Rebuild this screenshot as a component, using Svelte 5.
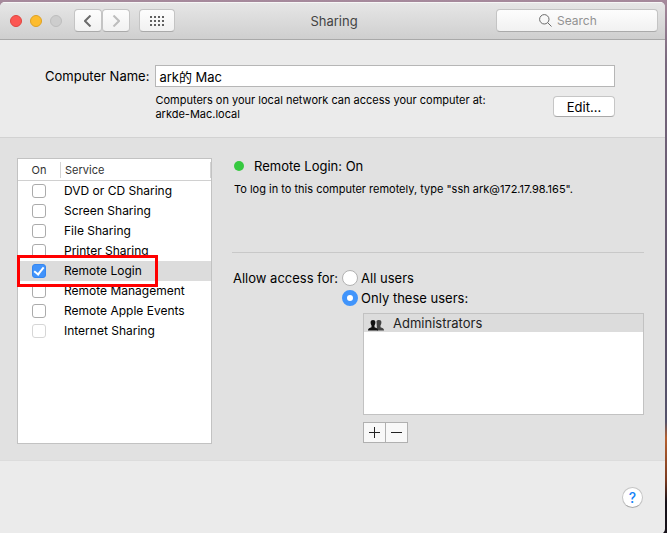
<script lang="ts">
type Service = {
	name: string;
	on: boolean;
	disabled?: boolean;
};

let services: Service[] = $state([
	{ name: 'DVD or CD Sharing', on: false },
	{ name: 'Screen Sharing', on: false },
	{ name: 'File Sharing', on: false },
	{ name: 'Printer Sharing', on: false },
	{ name: 'Remote Login', on: true },
	{ name: 'Remote Management', on: false },
	{ name: 'Remote Apple Events', on: false },
	{ name: 'Internet Sharing', on: false, disabled: true },
]);

let selected = $state('Remote Login');
let computerName = $state('ark的 Mac');
let access = $state('some');
let query = $state('');

const users = ['Administrators'];

// Dots of the "show all" button, 4 x 3
const dots = [0, 1, 2].flatMap((row) => [0, 1, 2, 3].map((col) => ({ x: col * 4, y: row * 4 })));
</script>

<div class="desktop">
	<div class="window">
		<header class="toolbar">
			<div class="controls">
				<div class="lights">
					<button class="light close" aria-label="Close"></button>
					<button class="light minimize" aria-label="Minimize"></button>
					<button class="light zoom" aria-label="Zoom" disabled></button>
				</div>
				<div class="nav">
					<button class="tool" aria-label="Back">
						<svg width="8" height="12" viewBox="0 0 8 12"><path d="M6.5 .5 1 6l5.5 5.5" /></svg>
					</button>
					<button class="tool" aria-label="Forward" disabled>
						<svg width="8" height="12" viewBox="0 0 8 12"><path d="M1.5 .5 7 6l-5.5 5.5" /></svg>
					</button>
				</div>
				<button class="tool grid" aria-label="Show All">
					<svg class="dots" width="14" height="10" viewBox="0 0 14 10">
						{#each dots as dot}
							<rect x={dot.x} y={dot.y} width="2" height="2" />
						{/each}
					</svg>
				</button>
			</div>
			<h1>Sharing</h1>
			<label class="search">
				<svg width="13" height="13" viewBox="0 0 13 13">
					<circle cx="5.3" cy="5.3" r="4.7" />
					<path d="M8.7 8.7 12.5 12.5" />
				</svg>
				<input type="text" placeholder="Search" aria-label="Search" bind:value={query} />
			</label>
		</header>

		<section class="identity">
			<label class="name-label" for="computer-name">Computer Name:</label>
			<div class="identity-fields">
				<input id="computer-name" type="text" bind:value={computerName} />
				<div class="identity-note">
					<p>Computers on your local network can access your computer at:<br />arkde-Mac.local</p>
					<button class="push">Edit…</button>
				</div>
			</div>
		</section>

		<main class="panel">
			<div class="services">
				<table>
					<thead>
						<tr>
							<th class="on">On</th>
							<th><span>Service</span></th>
						</tr>
					</thead>
					<tbody>
						{#each services as service, i}
							<tr class:selected={selected === service.name} onclick={() => (selected = service.name)}>
								<td class="on">
									<input
										id="service-{i}"
										type="checkbox"
										bind:checked={service.on}
										disabled={service.disabled}
									/>
								</td>
								<td><label for="service-{i}">{service.name}</label></td>
							</tr>
						{/each}
					</tbody>
				</table>
				<div class="marker"></div>
			</div>

			<div class="detail">
				<div class="status">
					<h2><span class="lamp"></span>Remote Login: On</h2>
					<p>To log in to this computer remotely, type "ssh ark@172.17.98.165".</p>
				</div>

				<div class="access">
					<span id="access-label">Allow access for:</span>
					<div class="radios" role="radiogroup" aria-labelledby="access-label">
						<label><input type="radio" name="access" value="all" bind:group={access} />All users</label>
						<label><input type="radio" name="access" value="some" bind:group={access} />Only these users:</label>
					</div>
				</div>

				<div class="users">
					<ul>
						{#each users as user}
							<li>
								<svg width="16" height="11" viewBox="0 0 16 11">
									<path
										class="back"
										d="M8.5 1.2C9 .2 10 0 11 0c1.600 0 2.400 .8 2.400 2.300 0 1.300-.4 2.300-.9 2.900v2l2.400 1c.8.4 1.100 1.300 1.100 2.300H9z"
									/>
									<path
										d="M2.600 2.300C2.600.8 3.600 0 5 0s2.400.8 2.400 2.300c0 1.300-.4 2.300-.9 2.900v2l2.400 1c.8.4 1.100 1.300 1.100 2.300H0c0-1 .3-1.900 1.100-2.300l2.400-1v-2c-.5-.6-.9-1.600-.9-2.900z"
									/>
								</svg>
								{user}
							</li>
						{/each}
					</ul>
					<div class="add-remove">
						<button aria-label="Add user">
							<svg width="11" height="11" viewBox="0 0 11 11"><path d="M0 5.5h11M5.5 0v11" /></svg>
						</button>
						<button aria-label="Remove user">
							<svg width="11" height="11" viewBox="0 0 11 11"><path d="M0 5.5h11" /></svg>
						</button>
					</div>
				</div>
			</div>
		</main>

		<footer>
			<button class="help" aria-label="Help">?</button>
		</footer>
	</div>
</div>

<style>
	:global(body) {
		margin: 0;
	}

	.desktop {
		box-sizing: border-box;
		min-height: 100vh;
		display: flex;
		padding: 2px 2px 0 0;
		background: linear-gradient(#a68a9c, #77677c 12%, #5b5068 60%, #54526a 79%, #b5602f 82%, #7a3a20 90%, #17121a 94%);
		font-family: Inter, 'Noto Sans CJK SC', sans-serif;
		font-size: 13px;
		line-height: 16px;
		color: #000;
	}

	button,
	input {
		box-sizing: border-box;
		margin: 0;
		padding: 0;
		font: inherit;
		color: inherit;
	}

	h1,
	h2,
	p,
	ul {
		margin: 0;
		padding: 0;
		font-size: inherit;
		font-weight: 400;
	}

	svg {
		display: block;
		fill: none;
		stroke: #222;
	}

	.window {
		flex: 1;
		min-width: 0;
		display: flex;
		flex-direction: column;
		border-radius: 5px 5px 5px 0;
		background: #ebebeb;
		overflow: hidden;
	}

	/* Toolbar */
	.toolbar {
		display: grid;
		grid-template-columns: 1fr auto 1fr;
		align-items: center;
		padding: 6px 7px 7px 10px;
		border-top: 1px solid #f6f6f6;
		border-bottom: 1px solid #a9a9a9;
		background: linear-gradient(#e6e6e6, #cfcfcf);
	}

	.controls,
	.lights,
	.nav {
		display: flex;
		align-items: center;
	}

	.lights {
		gap: 8px;
		margin-right: 12px;
	}

	.light {
		width: 12px;
		height: 12px;
		border: 1px solid #bdbdbd;
		border-radius: 50%;
		background: #cdcdcd;
	}

	.close {
		border-color: #e0443e;
		background: #fc5753;
	}

	.minimize {
		border-color: #dea123;
		background: #fdbc2e;
	}

	.nav {
		margin-right: 9px;
	}

	.tool {
		width: 28px;
		height: 23px;
		display: grid;
		place-items: center;
		border: 1px solid #c4c4c4;
		border-bottom-color: #aaa;
		border-radius: 4px;
		background: linear-gradient(#fdfdfd, #f1f1f1);
	}

	.tool svg {
		stroke: #6b6b6b;
		stroke-width: 2;
	}

	.tool:disabled svg {
		stroke: #bdbdbd;
	}

	.grid {
		width: 36px;
	}

	.tool .dots {
		fill: #606060;
		stroke: none;
	}

	.toolbar h1 {
		color: #444;
	}

	.search {
		box-sizing: border-box;
		justify-self: end;
		width: 162px;
		height: 23px;
		display: flex;
		align-items: center;
		justify-content: center;
		gap: 5px;
		border: 1px solid #c4c4c4;
		border-bottom-color: #aaa;
		border-radius: 4px;
		background: linear-gradient(#fdfdfd, #f1f1f1);
	}

	.search svg {
		stroke: #6b6b6b;
	}

	.search input {
		width: 58px;
		border: 0;
		background: none;
		font-size: 12px;
		outline: none;
	}

	.search input::placeholder {
		color: #929292;
		opacity: 1;
	}

	/* Computer name */
	.identity {
		display: flex;
		gap: 6px;
		padding: 25px 50px 16px 45px;
		border-bottom: 1px solid #d2d2d2;
	}

	.name-label {
		padding-top: 3px;
		white-space: nowrap;
	}

	.identity-fields {
		flex: 1;
		min-width: 0;
	}

	.identity-fields > input {
		display: block;
		width: 100%;
		height: 22px;
		padding: 0 3px;
		border: 1px solid #b6b6b6;
		background: #fff;
	}

	.identity-note {
		display: flex;
		justify-content: space-between;
		align-items: flex-start;
		padding-top: 6px;
		font-size: 11px;
		line-height: 14px;
	}

	.push {
		width: 62px;
		height: 21px;
		margin-top: 3px;
		border: 1px solid #c6c6c6;
		border-bottom-color: #a8a8a8;
		border-radius: 4px;
		background: #fff;
		font-size: 13px;
		line-height: 16px;
	}

	/* Service list and detail */
	.panel {
		display: flex;
		gap: 20px;
		padding: 20px 21px 16px 17px;
		border-bottom: 1px solid #dcdcdc;
		background: #e1e1e1;
	}

	.services {
		box-sizing: border-box;
		position: relative;
		width: 195px;
		min-height: 286px;
		border: 1px solid #c2c2c2;
		background: #fff;
	}

	table {
		width: 100%;
		border-collapse: separate;
		border-spacing: 0;
		font-size: 12px;
	}

	th {
		height: 21px;
		padding: 0;
		border-bottom: 1px solid #d0d0d0;
		font-size: 11px;
		font-weight: 400;
		text-align: left;
		color: #333;
	}

	th span {
		display: block;
		padding-left: 4px;
		border-left: 1px solid #d4d4d4;
		border-right: 1px solid #d4d4d4;
	}

	td {
		height: 20px;
		padding: 0 0 0 4px;
	}

	td.on {
		padding: 0 0 0 14px;
	}

	th.on {
		width: 42px;
		padding-left: 0;
		text-align: center;
	}

	.selected {
		background: #dcdcdc;
	}

	input[type='checkbox'] {
		display: block;
		appearance: none;
		width: 14px;
		height: 14px;
		border: 1px solid #ababab;
		border-radius: 3px;
		background: #fff;
	}

	input[type='checkbox']:disabled {
		border-color: #d6d6d6;
	}

	input[type='checkbox']:checked {
		display: grid;
		place-items: center;
		border-color: #3586f0;
		background: #4193fb;
	}

	input[type='checkbox']:checked::before {
		content: '';
		width: 4px;
		height: 8px;
		border: solid #fff;
		border-width: 0 2px 2px 0;
		transform: translateY(-1px) rotate(38deg);
	}

	.marker {
		position: absolute;
		top: 96px;
		left: -1px;
		width: 135px;
		height: 26px;
		border: 3px solid #f00;
		pointer-events: none;
	}

	.detail {
		flex: 1;
		min-width: 0;
	}

	.status {
		min-height: 94px;
		border-bottom: 1px solid #c8c8c8;
	}

	h2 {
		display: flex;
		align-items: center;
		gap: 10px;
		padding-left: 2px;
	}

	.lamp {
		width: 10px;
		height: 10px;
		border-radius: 50%;
		background: #36c940;
	}

	.status p {
		padding: 8px 0 0 2px;
		font-size: 11px;
		line-height: 14px;
		white-space: nowrap;
	}

	.access {
		display: flex;
		gap: 4px;
		padding: 15px 0 0 1px;
		line-height: 20px;
	}

	.access > span {
		white-space: nowrap;
	}

	.radios label {
		display: flex;
		align-items: center;
		gap: 3px;
		height: 20px;
	}

	input[type='radio'] {
		appearance: none;
		width: 16px;
		height: 16px;
		border: 1px solid #b2b2b2;
		border-radius: 50%;
		background: #fff;
	}

	input[type='radio']:checked {
		border: 5px solid #4094fb;
	}

	.users {
		margin: 5px 0 0 131px;
	}

	ul {
		min-height: 100px;
		border: 1px solid #c2c2c2;
		background: #fff;
		list-style: none;
	}

	li {
		display: flex;
		align-items: center;
		gap: 9px;
		height: 18px;
		padding: 0 4px;
		background: #dcdcdc;
		color: #222;
	}

	li svg {
		margin-top: 4px;
		fill: #111;
		stroke: none;
	}

	li .back {
		fill: #444;
	}

	.add-remove {
		display: flex;
		margin-top: 7px;
	}

	.add-remove button {
		width: 23px;
		height: 21px;
		display: grid;
		place-items: center;
		border: 1px solid #b0b0b0;
		background: #f8f8f8;
	}

	.add-remove button + button {
		margin-left: -1px;
	}

	/* Footer */
	footer {
		flex: 1;
		display: flex;
		justify-content: flex-end;
		align-items: flex-start;
		padding: 26px 22px;
	}

	.help {
		width: 21px;
		height: 21px;
		border: 1px solid #c4c4c4;
		border-bottom-color: #a8a8a8;
		border-radius: 50%;
		background: #fff;
		font-size: 14px;
		font-weight: 500;
		color: #1583f7;
	}
</style>
